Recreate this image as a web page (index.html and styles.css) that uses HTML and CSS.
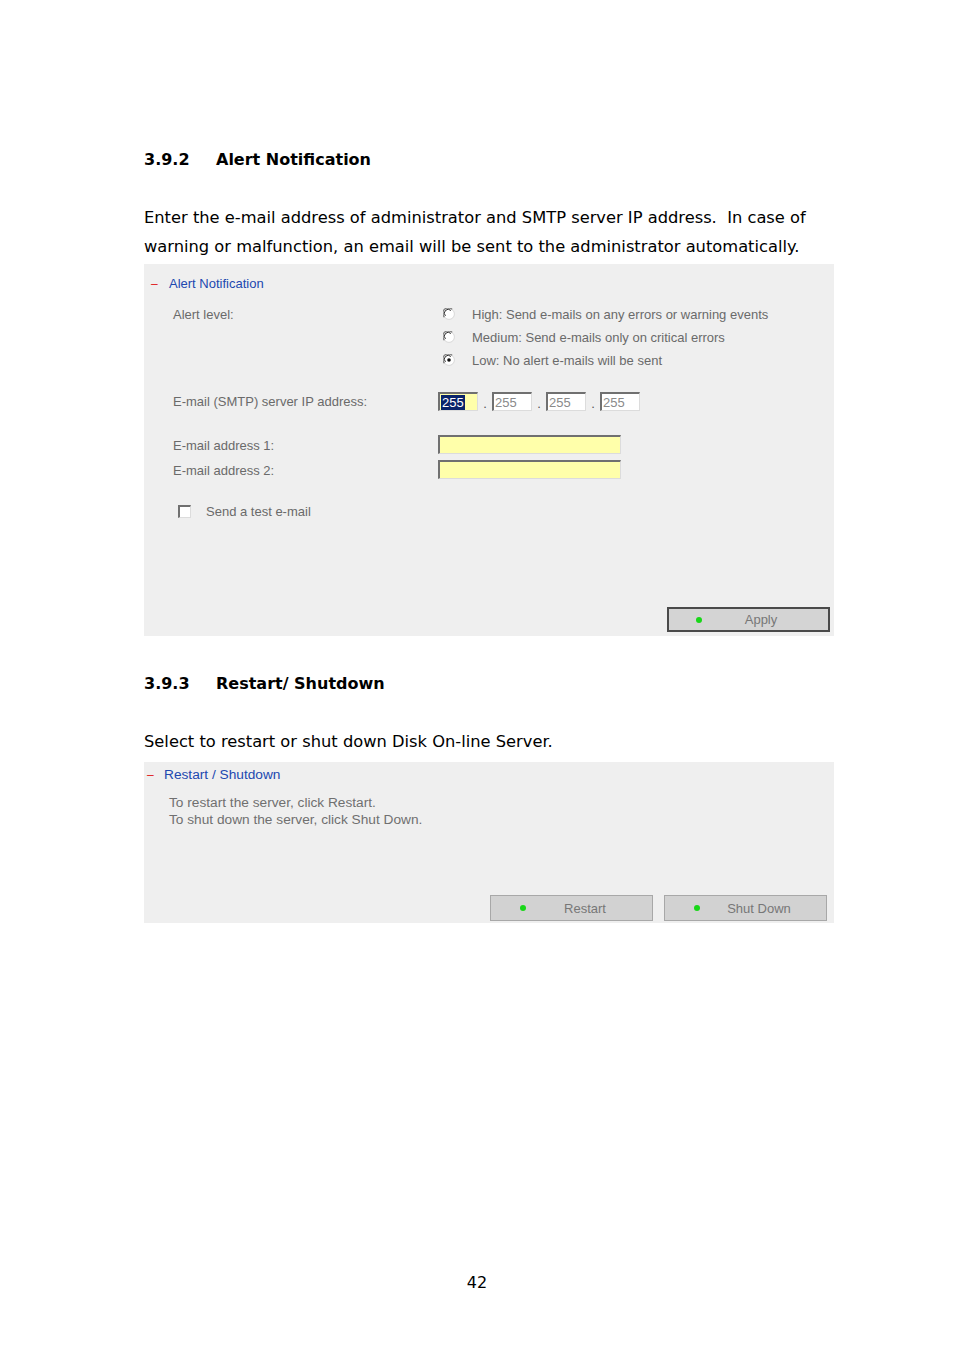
FILE: index.html
```html
<!DOCTYPE html>
<html>
<head>
<meta charset="utf-8">
<link rel="stylesheet" href="styles.css">
</head>
<body>
<div class="page">
  <h2 class="sec sec-1"><span class="num">3.9.2</span><span>Alert Notification</span></h2>
  <p class="text text-1">Enter the e-mail address of administrator and SMTP server IP address.&nbsp; In case of warning or malfunction, an email will be sent to the administrator automatically.</p>

  <div class="panel panel-alert">
    <div class="ptitle"><span class="minus">–</span><span class="plink">Alert Notification</span></div>

    <div class="row row-level">
      <div class="lbl">Alert level:</div>
      <div class="val radios">
        <div class="radio-row">
          <svg class="radio" viewBox="0 0 12 12" width="12" height="12"><circle cx="6" cy="6" r="5.4" fill="#fff" stroke="#d8d8d8" stroke-width="1"/><path d="M1.4 9.2 A5 5 0 0 1 9.2 1.4" fill="none" stroke="#808080" stroke-width="1.3"/><path d="M2.5 7.9 A3.6 3.6 0 0 1 7.9 2.5" fill="none" stroke="#303030" stroke-width="1"/></svg>
          <span>High: Send e-mails on any errors or warning events</span>
        </div>
        <div class="radio-row">
          <svg class="radio" viewBox="0 0 12 12" width="12" height="12"><circle cx="6" cy="6" r="5.4" fill="#fff" stroke="#d8d8d8" stroke-width="1"/><path d="M1.4 9.2 A5 5 0 0 1 9.2 1.4" fill="none" stroke="#808080" stroke-width="1.3"/><path d="M2.5 7.9 A3.6 3.6 0 0 1 7.9 2.5" fill="none" stroke="#303030" stroke-width="1"/></svg>
          <span>Medium: Send e-mails only on critical errors</span>
        </div>
        <div class="radio-row">
          <svg class="radio" viewBox="0 0 12 12" width="12" height="12"><circle cx="6" cy="6" r="5.4" fill="#fff" stroke="#d8d8d8" stroke-width="1"/><path d="M1.4 9.2 A5 5 0 0 1 9.2 1.4" fill="none" stroke="#808080" stroke-width="1.3"/><path d="M2.5 7.9 A3.6 3.6 0 0 1 7.9 2.5" fill="none" stroke="#303030" stroke-width="1"/><circle cx="6" cy="6" r="1.8" fill="#111"/></svg>
          <span>Low: No alert e-mails will be sent</span>
        </div>
      </div>
    </div>

    <div class="row row-ip">
      <div class="lbl">E-mail (SMTP) server IP address:</div>
      <div class="val ip">
        <span class="inp ipbox yellow"><span class="sel">255</span></span>
        <span class="dot">.</span>
        <span class="inp ipbox">255</span>
        <span class="dot">.</span>
        <span class="inp ipbox">255</span>
        <span class="dot">.</span>
        <span class="inp ipbox">255</span>
      </div>
    </div>

    <div class="row row-mail1">
      <div class="lbl">E-mail address 1:</div>
      <div class="val"><span class="inp mailbox yellow"></span></div>
    </div>
    <div class="row row-mail2">
      <div class="lbl">E-mail address 2:</div>
      <div class="val"><span class="inp mailbox yellow"></span></div>
    </div>

    <div class="row row-check">
      <span class="chk"></span>
      <span>Send a test e-mail</span>
    </div>

    <div class="btnbar">
      <div class="btn btn-apply"><span class="led"></span><span class="btxt">Apply</span></div>
    </div>
  </div>

  <h2 class="sec sec-2"><span class="num">3.9.3</span><span>Restart/ Shutdown</span></h2>
  <p class="text text-2">Select to restart or shut down Disk On-line Server.</p>

  <div class="panel panel-restart">
    <div class="ptitle"><span class="minus">–</span><span class="plink">Restart / Shutdown</span></div>
    <div class="info">
      <div>To restart the server, click Restart.</div>
      <div>To shut down the server, click Shut Down.</div>
    </div>
    <div class="btnbar btnbar-2">
      <div class="btn btn-soft"><span class="led"></span><span class="btxt">Restart</span></div>
      <div class="btn btn-soft"><span class="led"></span><span class="btxt">Shut Down</span></div>
    </div>
  </div>

  <div class="pagenum">42</div>
</div>
</body>
</html>
```

FILE: styles.css
```css
* { box-sizing: border-box; }
html, body { margin: 0; padding: 0; background: #fff; }
body { width: 954px; height: 1351px; overflow: hidden; }

.page {
  padding-left: 144px;
  padding-top: 150px;
  width: 954px;
  font-family: "DejaVu Sans", Verdana, sans-serif;
  color: #000;
}

.sec {
  margin: 0;
  font-size: 16px;
  line-height: 20px;
  font-weight: bold;
  display: flex;
}
.sec .num { width: 72px; }
.sec-2 { margin-top: 38px; }

.text {
  margin: 0;
  font-size: 16.3px;
  line-height: 29px;
  width: 700px;
}
.text-1 { margin-top: 33px; }
.text-2 { margin-top: 33px; }

.panel {
  width: 690px;
  background: #efefef;
  font-family: "Liberation Sans", Tahoma, sans-serif;
  font-size: 13px;
  color: #6a6a6a;
  display: flex;
  flex-direction: column;
}
.panel-alert { margin-top: 3px; height: 372px; }
.panel-restart { margin-top: 6px; height: 161px; font-size: 13.7px; }

.ptitle {
  display: flex;
  align-items: center;
  height: 16px;
  line-height: 16px;
}
.panel-alert .ptitle { margin-top: 12px; padding-left: 7px; }
.panel-restart .ptitle { margin-top: 5px; padding-left: 3px; }
.minus { color: #e02020; width: 18px; font-size: 12px; }
.panel-restart .minus { width: 17px; }
.plink { color: #2148b0; }

.row { display: flex; align-items: center; }
.lbl { width: 294px; padding-left: 29px; flex: none; }
.val { flex: none; }

.row-level { align-items: flex-start; margin-top: 14px; }
.row-level .lbl { line-height: 16px; margin-top: 1px; }
.radios { display: flex; flex-direction: column; gap: 7px; padding-left: 5px; }
.radio-row { display: flex; align-items: center; height: 16px; }
.radio { flex: none; margin-right: 17px; }

.row-ip { margin-top: 24px; height: 19px; }
.ip { display: flex; align-items: center; }
.dot { width: 14px; text-align: center; color: #555; padding-top: 4px; }

.inp {
  display: inline-flex;
  align-items: center;
  height: 19px;
  background: #fff;
  border-top: 2px solid #707070;
  border-left: 2px solid #707070;
  border-bottom: 1px solid #dcdcdc;
  border-right: 1px solid #dcdcdc;
  font-size: 13px;
  color: #8a8a8a;
  padding-left: 1px;
}
.ipbox { width: 40px; }
.yellow { background: #ffffaa; }
.sel { background: #0a246a; color: #fff; line-height: 15px; padding: 0 1px; }
.mailbox { width: 183px; }

.row-mail1 { margin-top: 25px; height: 19px; }
.row-mail2 { margin-top: 6px; height: 19px; }

.row-check { margin-top: 23px; height: 16px; padding-left: 34px; }
.chk {
  width: 13px; height: 13px;
  background: #fff;
  border-top: 2px solid #707070;
  border-left: 2px solid #707070;
  border-bottom: 1px solid #dcdcdc;
  border-right: 1px solid #dcdcdc;
  margin-right: 15px;
}

.btnbar {
  margin-top: auto;
  display: flex;
  justify-content: flex-end;
  padding: 0 4px 4px 0;
}
.btnbar-2 { padding: 0 7px 2px 0; gap: 11px; }

.btn {
  width: 163px;
  height: 25px;
  display: flex;
  align-items: center;
  background: #d4d4d4;
  color: #777;
  font-size: 13px;
}
.btn-apply { border: 2px solid #4a4a4a; }
.btn-soft { border: 1px solid #a8a8a8; background: #d2d2d2; height: 26px; }
.led {
  width: 6px; height: 6px; border-radius: 50%;
  background: #19d719;
  margin-left: 27px;
  flex: none;
}
.btn-soft .led { margin-left: 29px; }
.btxt { flex: 1; text-align: center; padding-right: 8px; }

.info { margin-top: 11px; padding-left: 25px; line-height: 17px; color: #707070; }

.pagenum {
  margin-top: 350px;
  width: 666px;
  text-align: center;
  font-size: 16px;
  line-height: 20px;
}
```
